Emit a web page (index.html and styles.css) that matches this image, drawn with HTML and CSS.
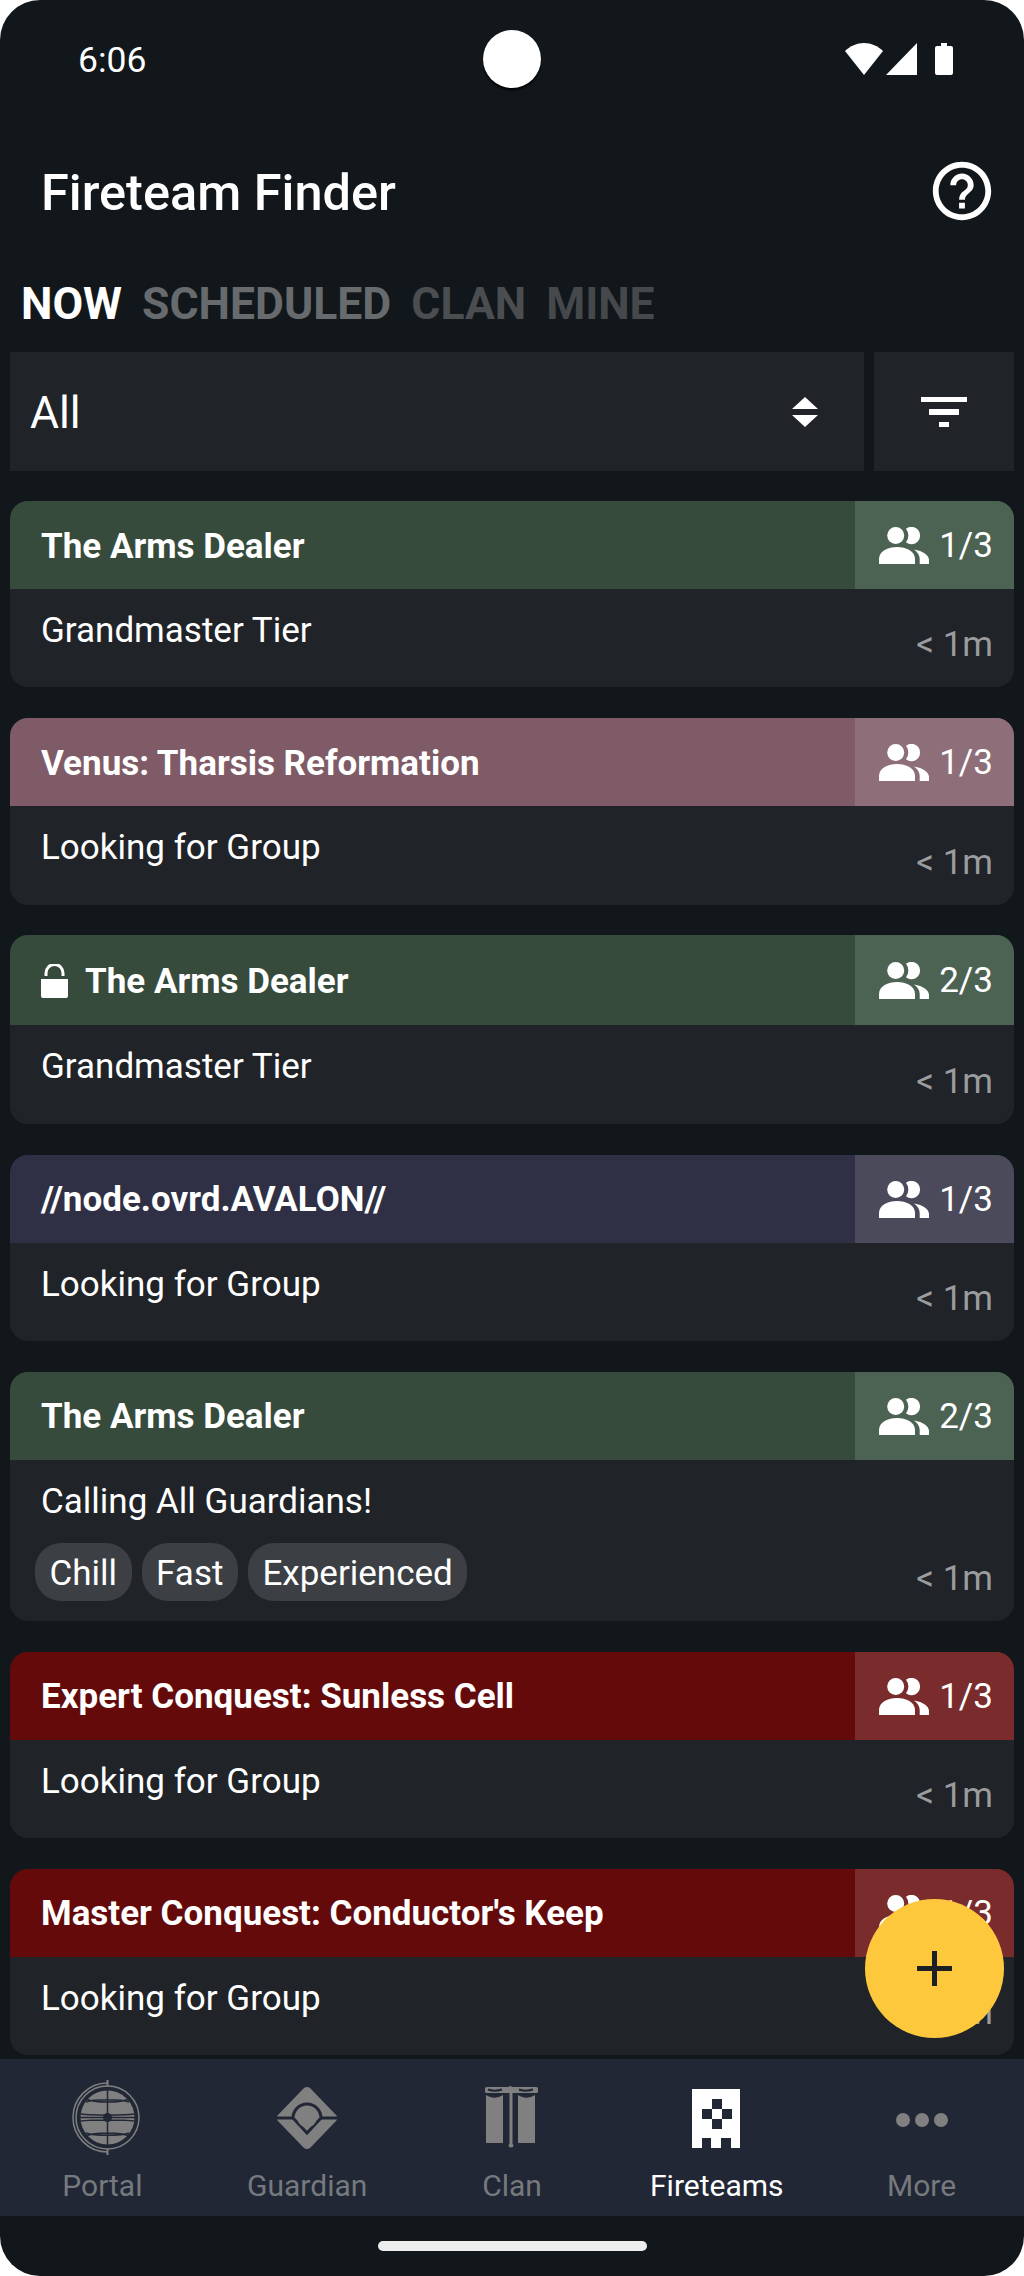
FILE: index.html
```html
<!DOCTYPE html>
<html lang="en">
<head>
    <meta charset="UTF-8">
    <meta name="viewport" content="width=device-width, initial-scale=1.0">
    <title>Fireteam Finder</title>
    <link rel="stylesheet" href="styles.css">
</head>
<body>
    <svg class="defs">
        <defs>
            <symbol id="people" viewBox="0 0 50 37">
                <circle cx="16.700" cy="8.500" r="8.500"/>
                <path d="M27 1.700A8.700 8.700 0 1 1 27 15.300A11 11 0 0 0 27 1.700z"/>
                <path d="M0 37v-5C0 24 9 20 18 20s18 4 18 12v5z"/>
                <path d="M35 22.500C44 24 50 28 50 33v4H40.700v-5C40.700 28 38.500 25 35 22.500z"/>
            </symbol>
        </defs>
    </svg>

    <div class="screen">
        <div class="status-bar">
            <span class="clock">6:06</span>
            <span class="camera"></span>
            <div class="status-icons">
                <svg class="ic-wifi" viewBox="0 0 38 32"><path d="M0 8C5 3 12 0 19 0s14 3 19 8L19 32z"/></svg>
                <svg class="ic-signal" viewBox="0 0 31 32"><path d="M31 0v32H0z"/></svg>
                <svg class="ic-battery" viewBox="0 0 18 32"><path d="M6 0h6v3h4a2 2 0 0 1 2 2v25a2 2 0 0 1-2 2H2a2 2 0 0 1-2-2V5a2 2 0 0 1 2-2h4z"/></svg>
            </div>
        </div>

        <div class="app-bar">
            <h1>Fireteam Finder</h1>
            <svg class="help" viewBox="0 0 24 24"><path d="M11 18h2v-2h-2v2zm1-16C6.480 2 2 6.480 2 12s4.480 10 10 10 10-4.480 10-10S17.520 2 12 2zm0 18c-4.410 0-8-3.590-8-8s3.590-8 8-8 8 3.590 8 8-3.590 8-8 8zm0-14c-2.210 0-4 1.790-4 4h2c0-1.100.9-2 2-2s2 .9 2 2c0 2-3 1.750-3 5h2c0-2.250 3-2.500 3-5 0-2.210-1.790-4-4-4z"/></svg>
        </div>

        <div class="tabs">
            <span class="tab tab-active">NOW</span>
            <span class="tab tab-second">SCHEDULED</span>
            <span class="tab tab-third">CLAN</span>
            <span class="tab tab-fourth">MINE</span>
        </div>

        <div class="filters">
            <div class="select">
                <span class="select-label">All</span>
                <svg class="ic-sort" viewBox="0 0 26 30"><path d="M13 0l13 12H0zM13 30L0 18h26z"/></svg>
            </div>
            <div class="filter-btn">
                <svg class="ic-filter" viewBox="0 0 46 30"><path d="M0 0h46v5H0zM8 12h30v6H8zM18 25h10v5H18z"/></svg>
            </div>
        </div>

        <div class="list">
            <div class="card green">
                <div class="card-head">
                    <div class="card-title">The Arms Dealer</div>
                    <div class="card-stat"><svg class="ic-people"><use href="#people"/></svg>1/3</div>
                </div>
                <div class="card-body">
                    <div class="card-main"><div class="card-text">Grandmaster Tier</div></div>
                    <div class="card-time">&lt; 1m</div>
                </div>
            </div>

            <div class="card mauve">
                <div class="card-head">
                    <div class="card-title">Venus: Tharsis Reformation</div>
                    <div class="card-stat"><svg class="ic-people"><use href="#people"/></svg>1/3</div>
                </div>
                <div class="card-body">
                    <div class="card-main"><div class="card-text">Looking for Group</div></div>
                    <div class="card-time">&lt; 1m</div>
                </div>
            </div>

            <div class="card green card-locked">
                <div class="card-head">
                    <div class="card-title">
                        <svg class="ic-lock" viewBox="0 0 27 34"><path d="M0 15h27v17a2 2 0 0 1-2 2H2a2 2 0 0 1-2-2z"/><path class="lock-loop" d="M5 12V9a8.500 8.500 0 0 1 17 0v3"/></svg>
                        The Arms Dealer
                    </div>
                    <div class="card-stat"><svg class="ic-people"><use href="#people"/></svg>2/3</div>
                </div>
                <div class="card-body">
                    <div class="card-main"><div class="card-text">Grandmaster Tier</div></div>
                    <div class="card-time">&lt; 1m</div>
                </div>
            </div>

            <div class="card purple">
                <div class="card-head">
                    <div class="card-title">//node.ovrd.AVALON//</div>
                    <div class="card-stat"><svg class="ic-people"><use href="#people"/></svg>1/3</div>
                </div>
                <div class="card-body">
                    <div class="card-main"><div class="card-text">Looking for Group</div></div>
                    <div class="card-time">&lt; 1m</div>
                </div>
            </div>

            <div class="card green">
                <div class="card-head">
                    <div class="card-title">The Arms Dealer</div>
                    <div class="card-stat"><svg class="ic-people"><use href="#people"/></svg>2/3</div>
                </div>
                <div class="card-body">
                    <div class="card-main">
                        <div class="card-text">Calling All Guardians!</div>
                        <div class="chips">
                            <span class="chip">Chill</span>
                            <span class="chip">Fast</span>
                            <span class="chip">Experienced</span>
                        </div>
                    </div>
                    <div class="card-time">&lt; 1m</div>
                </div>
            </div>

            <div class="card red">
                <div class="card-head">
                    <div class="card-title">Expert Conquest: Sunless Cell</div>
                    <div class="card-stat"><svg class="ic-people"><use href="#people"/></svg>1/3</div>
                </div>
                <div class="card-body">
                    <div class="card-main"><div class="card-text">Looking for Group</div></div>
                    <div class="card-time">&lt; 1m</div>
                </div>
            </div>

            <div class="card red">
                <div class="card-head">
                    <div class="card-title">Master Conquest: Conductor's Keep</div>
                    <div class="card-stat"><svg class="ic-people"><use href="#people"/></svg>1/3</div>
                </div>
                <div class="card-body">
                    <div class="card-main"><div class="card-text">Looking for Group</div></div>
                    <div class="card-time">&lt; 1m</div>
                </div>
            </div>
        </div>

        <div class="fab">
            <svg viewBox="0 0 35 35"><path d="M15 0h5v15h15v5H20v15h-5V20H0v-5h15z"/></svg>
        </div>

        <nav class="nav">
            <div class="nav-item">
                <svg class="nav-icon" viewBox="0 0 76 76">
                    <path class="portal-ring" d="M43.500 3a34.500 34.500 0 0 0 0 69"/>
                    <path class="portal-tick" d="M43.500 0v6M43.500 69v6"/>
                    <circle class="portal-ring" cx="43.500" cy="37.500" r="31.500"/>
                    <circle class="gray-fill" cx="43.500" cy="37.500" r="27"/>
                    <path class="portal-cut" d="M43.500 10v55M16 37.500h55M22 19c8 4 35 4 43 0M22 22c8-3 35-3 43 0M22 56c8-4 35-4 43 0M22 53c8 3 35 3 43 0M17 34c8 1.500 45 1.500 53 0M17 41c8-1.500 45-1.500 53 0"/>
                    <circle class="portal-dot" cx="43.500" cy="37.500" r="4.500"/>
                </svg>
                <span>Portal</span>
            </div>
            <div class="nav-item">
                <svg class="nav-icon" viewBox="0 0 76 76">
                    <path class="gray-fill" d="M34 9a5 5 0 0 1 8 0l25 26a4 4 0 0 1 0 6L42 67a5 5 0 0 1-8 0L9 41a4 4 0 0 1 0-6z"/>
                    <path class="guardian-cut" d="M6 38h18M52 38h18"/>
                    <path class="guardian-cut" d="M24 38A14 14 0 0 1 52 38L38 53z"/>
                    <circle class="gray-fill" cx="38" cy="38" r="9.500"/>
                </svg>
                <span>Guardian</span>
            </div>
            <div class="nav-item">
                <svg class="nav-icon" viewBox="0 0 76 76">
                    <path class="gray-fill" d="M11 8.500a1.500 1.500 0 0 1 1.500-1.500H34l2.500-1 2.500 1h23.500a1.500 1.500 0 0 1 1.500 1.500v3a1.500 1.500 0 0 1-1.500 1.500H38.500v51l1 1a2.500 2.500 0 0 1-5 0l1-1V13H12.500a1.500 1.500 0 0 1-1.500-1.500z"/>
                    <path class="gray-fill" d="M12 15c6 3.500 11 3.500 17 0v48H12zM44 15c6 3.500 11 3.500 17 0v48H44z"/>
                    <path class="clan-cut" d="M14 9.500c4 1.500 9 1.500 14 0M45 9.500c4 1.500 9 1.500 14 0"/>
                </svg>
                <span>Clan</span>
            </div>
            <div class="nav-item nav-active">
                <svg class="nav-icon" viewBox="0 0 76 76">
                    <path class="white-fill" d="M13 9h48v59H52V58H42v10H32V58H23v10H13z"/>
                    <path class="fire-cut" d="M33 19h10v10H33zM23 29h10v10H23zM43 29h10v10H43zM33 39h10v10H33z"/>
                </svg>
                <span>Fireteams</span>
            </div>
            <div class="nav-item">
                <svg class="nav-icon" viewBox="0 0 76 76">
                    <circle class="gray-fill" cx="19" cy="40" r="7"/>
                    <circle class="gray-fill" cx="38" cy="40" r="7"/>
                    <circle class="gray-fill" cx="57" cy="40" r="7"/>
                </svg>
                <span>More</span>
            </div>
        </nav>

        <div class="gesture-area">
            <span class="home-bar"></span>
        </div>
    </div>
</body>
</html>
```

FILE: styles.css
```css
* {
    box-sizing: border-box;
}

html, body {
    margin: 0;
    padding: 0;
    background-color: #ffffff;
}

body {
    font-family: Roboto, "Liberation Sans", sans-serif;
    color: #ffffff;
}

.defs {
    display: block;
    width: 0;
    height: 0;
}

.screen {
    position: relative;
    display: flex;
    flex-direction: column;
    width: 1024px;
    height: 2276px;
    overflow: hidden;
    background-color: #12171b;
    border-radius: 40px;
}

/* status bar */
.status-bar {
    display: grid;
    grid-template-columns: 1fr 58px 1fr;
    align-items: center;
    height: 118px;
    flex: none;
}

.clock {
    padding: 2px 0 0 78px;
    font-size: 35.500px;
}

.camera {
    width: 58px;
    height: 58px;
    background-color: #ffffff;
    border-radius: 50%;
    box-shadow: 0 2px 2px #000000;
}

.status-icons {
    display: flex;
    justify-content: flex-end;
    align-items: center;
    padding-right: 71px;
}

.status-icons svg {
    height: 32px;
    fill: #ffffff;
}

.ic-wifi {
    width: 38px;
}

.ic-signal {
    width: 31px;
    margin-left: 3px;
}

.ic-battery {
    width: 18px;
    margin-left: 18px;
}

/* title */
.app-bar {
    display: flex;
    justify-content: space-between;
    align-items: center;
    height: 142px;
    padding: 3px 27px 0 41px;
    flex: none;
}

.app-bar h1 {
    margin: 3px 0 0;
    font-size: 50.500px;
    font-weight: 500;
}

.help {
    width: 70px;
    height: 70px;
    fill: #ffffff;
}

/* tabs */
.tabs {
    display: flex;
    gap: 20px;
    height: 92px;
    padding: 19px 0 0 21px;
    flex: none;
}

.tab {
    font-size: 44.500px;
    line-height: 50px;
    font-weight: 700;
}

.tab-active {
    color: #ffffff;
}

.tab-second {
    color: #676b6e;
}

.tab-third {
    color: #4a4e51;
}

.tab-fourth {
    color: #45494c;
}

/* filter row */
.filters {
    display: flex;
    gap: 10px;
    height: 119px;
    padding: 0 10px;
    flex: none;
}

.select {
    display: flex;
    justify-content: space-between;
    align-items: center;
    flex: 1;
    padding: 0 46px 0 20px;
    font-size: 44.500px;
    background-color: #202328;
}

.select-label {
    padding-top: 3px;
}

.ic-sort {
    width: 26px;
    height: 30px;
    fill: #ffffff;
}

.filter-btn {
    display: flex;
    justify-content: center;
    align-items: center;
    width: 140px;
    background-color: #202328;
}

.ic-filter {
    width: 46px;
    height: 30px;
    fill: #ffffff;
}

/* list of fireteams */
.list {
    display: flex;
    flex-direction: column;
    gap: 30.800px;
    flex: 1;
    min-height: 0;
    overflow: hidden;
    padding: 30px 10px 0;
}

.card {
    flex: none;
    overflow: hidden;
    background-color: #202328;
    border-radius: 18px;
}

.card-head {
    display: flex;
    height: 88px;
}

.card-locked .card-head {
    height: 90px;
}

.card-title {
    display: flex;
    align-items: center;
    flex: 1;
    padding: 2px 0 0 31px;
    font-size: 35px;
    font-weight: 700;
}

.card-stat {
    display: flex;
    justify-content: flex-end;
    align-items: center;
    gap: 10px;
    width: 159px;
    padding: 1px 21px 0 0;
    font-size: 35px;
}

.ic-people {
    width: 50px;
    height: 37px;
    fill: #ffffff;
}

.ic-lock {
    width: 27px;
    height: 34px;
    margin-right: 17px;
    fill: #ffffff;
}

.lock-loop {
    fill: none;
    stroke: #ffffff;
    stroke-width: 3;
}

.green .card-head {
    background-color: #364b3c;
}

.green .card-stat {
    background-color: #4c6253;
}

.mauve .card-head {
    background-color: #7f5b68;
}

.mauve .card-stat {
    background-color: #8e6e79;
}

.purple .card-head {
    background-color: #2f3045;
}

.purple .card-stat {
    background-color: #4a4a5b;
}

.red .card-head {
    background-color: #640a0a;
}

.red .card-stat {
    background-color: #7a2c2c;
}

.card-body {
    display: flex;
    justify-content: space-between;
    align-items: flex-end;
    min-height: 98.400px;
    padding: 21px 21px 20px 31px;
}

.card-main {
    align-self: flex-start;
}

.card-text {
    font-size: 35px;
    line-height: 42px;
}

.card-time {
    margin-bottom: 2px;
    font-size: 35px;
    line-height: 40px;
    color: #9a9c9e;
}

.chips {
    display: flex;
    gap: 10px;
    margin: 20px 0 0 -6px;
}

.chip {
    height: 58px;
    padding: 0 14.500px;
    font-size: 35px;
    line-height: 61px;
    background-color: #3c3f44;
    border-radius: 26px;
}

/* add button */
.fab {
    position: absolute;
    left: 865px;
    top: 1899px;
    display: flex;
    justify-content: center;
    align-items: center;
    width: 139px;
    height: 139px;
    background-color: #fdc83c;
    border-radius: 50%;
}

.fab svg {
    width: 35px;
    height: 35px;
    fill: #1c2025;
}

/* bottom nav */
.nav {
    display: grid;
    grid-template-columns: repeat(5, 1fr);
    height: 157px;
    margin-top: 4px;
    padding-top: 21px;
    background-color: #212735;
    flex: none;
}

.nav-item {
    display: flex;
    flex-direction: column;
    align-items: center;
    font-size: 30px;
    line-height: 36px;
    color: #76797e;
}

.nav-active {
    color: #ffffff;
}

.nav-icon {
    width: 76px;
    height: 76px;
    margin-bottom: 12px;
}

.gray-fill {
    fill: #808080;
}

.white-fill {
    fill: #ffffff;
}

.portal-ring {
    fill: none;
    stroke: #808080;
    stroke-width: 1.500;
}

.portal-tick {
    fill: none;
    stroke: #808080;
    stroke-width: 2;
}

.portal-cut {
    fill: none;
    stroke: #212735;
    stroke-width: 1.500;
}

.portal-dot {
    fill: #212735;
}

.guardian-cut {
    fill: none;
    stroke: #212735;
    stroke-width: 3;
}

.clan-cut {
    fill: none;
    stroke: #212735;
    stroke-width: 2;
}

.fire-cut {
    fill: #212735;
}

/* gesture area */
.gesture-area {
    display: flex;
    justify-content: center;
    align-items: flex-start;
    height: 60px;
    padding-top: 25px;
    flex: none;
}

.home-bar {
    width: 269px;
    height: 10px;
    background-color: #eceeee;
    border-radius: 5px;
}
```
